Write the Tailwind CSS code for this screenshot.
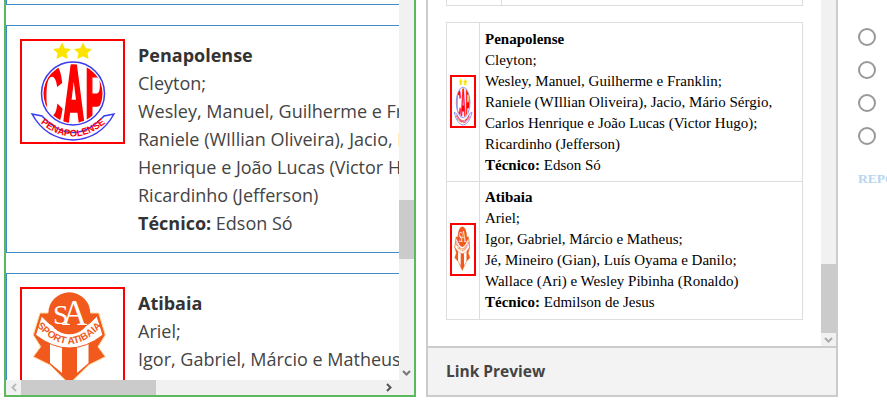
<!DOCTYPE html>
<html>
<head>
<meta charset="utf-8">
<script src="https://cdn.jsdelivr.net/npm/@tailwindcss/browser@4"></script>
</head>
<body class="bg-white">
<svg width="0" height="0" class="absolute">
  <defs>
    <clipPath id="capclip"><circle cx="51" cy="52.500" r="29.500"/></clipPath>
    <path id="penarc" d="M15 79 Q51 112 87 79" fill="none"/>
    <path id="atiarc" d="M14 36 Q47.300 74 80.600 36" fill="none"/>
    <g id="pena">
      <polygon points="40,1.500 42.800,7.200 49,8 44.500,12.300 45.600,18 40,15.300 34.400,18 35.500,12.300 31,8 37.200,7.200" fill="#fde400"/>
      <polygon points="61,1.500 63.800,7.200 70,8 65.500,12.300 66.600,18 61,15.300 55.400,18 56.500,12.300 52,8 58.200,7.200" fill="#fde400"/>
      <path d="M10 73 L20 75 Q51 108 82 75 L92 73 Q78 98 51 99 Q24 98 10 73 Z" fill="#fff" stroke="#3a3af0" stroke-width="1.500"/>
      <circle cx="51" cy="52.500" r="31.500" fill="#fff" stroke="#3a3af0" stroke-width="1.500"/>
      <g clip-path="url(#capclip)">
        <text x="51" y="38.600" transform="scale(1 2.200)" text-anchor="middle" textLength="66" lengthAdjust="spacingAndGlyphs" font-family="Liberation Sans" font-weight="700" font-size="40" fill="#f00" stroke="#f00" stroke-width="1.600">CAP</text>
      </g>
      <text font-family="Liberation Sans" font-weight="700" font-size="9.500" fill="#f00"><textPath href="#penarc" startOffset="50%" text-anchor="middle">PENAPOLENSE</textPath></text>
    </g>
    <g id="ati">
      <path d="M18 24 L11.300 46 L18.700 57.700 L11.300 67.700 L28 76 L47.300 95 L66.700 76 L83.300 67.700 L76 57.700 L83.300 46 L76.700 24 Z" fill="#f15a1c" stroke="#fbd9a0" stroke-width="1"/>
      <polygon points="28,50 40,58 40,84 28,74" fill="#fff"/>
      <polygon points="66.500,50 55,58 55,84 66.500,74" fill="#fff"/>
      <path d="M19.500 27 L13.500 46 Q47.300 72 81 46 L75 27 Q47.300 58 19.500 27 Z" fill="#fff" stroke="#f15a1c" stroke-width="1"/>
      <circle cx="47.300" cy="24.300" r="21" fill="#f15a1c"/>
      <text x="31" y="35" font-family="Liberation Serif" font-size="28" fill="#fff">S</text>
      <text x="40" y="36" font-family="Liberation Serif" font-size="35" fill="#fff">A</text>
      <text font-family="Liberation Sans" font-weight="700" font-size="10" fill="#f15a1c"><textPath href="#atiarc" startOffset="50%" text-anchor="middle">SPORT ATIBAIA</textPath></text>
    </g>
  </defs>
</svg>

<div class="flex h-[403px] w-[887px] overflow-hidden bg-white">
  <!-- left panel -->
  <div class="ml-1 flex h-[397px] w-[412px] shrink-0 flex-col border-x-[2px] border-b-[2px] border-[#5cb85c]">
    <div class="flex min-h-0 flex-1">
      <div class="min-w-0 flex-1 overflow-hidden font-['Open_Sans',sans-serif] text-[18px] leading-[28px] text-[#444]">
        <div class="h-[5px] w-[600px] border-b border-l border-[#428bca]"></div>
        <div class="mt-5 flex h-[228px] w-[600px] gap-[13px] border border-[#428bca] p-[13px]">
          <svg class="h-[105px] w-[105px] shrink-0 border-2 border-[#f00]" viewBox="0 0 101 101"><use href="#pena"/></svg>
          <div class="whitespace-nowrap pt-[2px]">
            <b class="text-[#333]">Penapolense</b><br>Cleyton;<br>Wesley, Manuel, Guilherme e Franklin;<br>Raniele (WIllian Oliveira), Jacio, Mário Sérgio, Carlos<br>Henrique e João Lucas (Victor Hugo);<br>Ricardinho (Jefferson)<br><b class="text-[#333]">Técnico:</b> Edson Só
          </div>
        </div>
        <div class="mt-5 flex w-[600px] gap-[13px] border border-[#428bca] p-[13px]">
          <svg class="h-[105px] w-[105px] shrink-0 border-2 border-[#f00]" viewBox="0 0 101 101"><use href="#ati"/></svg>
          <div class="whitespace-nowrap pt-[2px]">
            <b class="text-[#333]">Atibaia</b><br>Ariel;<br>Igor, Gabriel, Márcio e Matheus;
          </div>
        </div>
      </div>
      <!-- vertical scrollbar -->
      <div class="flex w-[15px] shrink-0 flex-col bg-[#f1f1f1]">
        <div class="mt-[200px] h-[59px] bg-[#cbcbcb]"></div>
        <div class="mt-auto flex h-[15px] items-center justify-center">
          <svg width="9" height="6" viewBox="0 0 9 6"><path d="M1 1 L4.500 4.500 L8 1" fill="none" stroke="#777" stroke-width="2"/></svg>
        </div>
      </div>
    </div>
    <!-- horizontal scrollbar -->
    <div class="flex h-[15px] shrink-0 items-center bg-[#f1f1f1]">
      <div class="flex w-[15px] justify-center">
        <svg width="6" height="9" viewBox="0 0 6 9"><path d="M5 1 L1.500 4.500 L5 8" fill="none" stroke="#bbb" stroke-width="2"/></svg>
      </div>
      <div class="h-full w-[135px] bg-[#cbcbcb]"></div>
      <div class="ml-auto mr-[18px] flex w-[15px] justify-center">
        <svg width="6" height="9" viewBox="0 0 6 9"><path d="M1 1 L4.500 4.500 L1 8" fill="none" stroke="#555" stroke-width="2"/></svg>
      </div>
    </div>
  </div>

  <!-- middle panel -->
  <div class="ml-[10px] flex h-[397px] w-[412px] shrink-0 flex-col border-x-[2px] border-b-[2px] border-[#ccc]">
    <div class="flex min-h-0 flex-1">
      <div class="min-w-0 flex-1 overflow-hidden pl-[18px] font-['Liberation_Serif',serif] text-[15px] leading-[21px] text-black">
        <div class="flex h-[6px] w-[357px] border-x border-b border-[#ddd]">
          <div class="w-[55px] border-r border-[#ddd]"></div>
        </div>
        <table class="mt-4 w-[357px] border-collapse">
          <tr>
            <td class="w-[33px] border border-[#ddd] px-[3px] align-middle">
              <svg class="-mt-[2px] block h-[53px] w-[26px] border-2 border-[#f00]" viewBox="0 0 101 101" preserveAspectRatio="none"><use href="#pena"/></svg>
            </td>
            <td class="border border-[#ddd] px-[5px] pb-[5px] pt-[6px]">
              <b>Penapolense</b><br>Cleyton;<br>Wesley, Manuel, Guilherme e Franklin;<br>Raniele (WIllian Oliveira), Jacio, Mário Sérgio,<br>Carlos Henrique e João Lucas (Victor Hugo);<br>Ricardinho (Jefferson)<br><b>Técnico:</b> Edson Só
            </td>
          </tr>
          <tr>
            <td class="border border-[#ddd] px-[3px] align-middle">
              <svg class="-mt-[2px] block h-[53px] w-[26px] border-2 border-[#f00]" viewBox="0 0 101 101" preserveAspectRatio="none"><use href="#ati"/></svg>
            </td>
            <td class="border border-[#ddd] px-[5px] pb-[6px] pt-[5px]">
              <b>Atibaia</b><br>Ariel;<br>Igor, Gabriel, Márcio e Matheus;<br>Jé, Mineiro (Gian), Luís Oyama e Danilo;<br>Wallace (Ari) e Wesley Pibinha (Ronaldo)<br><b>Técnico:</b> Edmilson de Jesus
            </td>
          </tr>
        </table>
      </div>
      <div class="flex w-[15px] shrink-0 flex-col bg-[#f1f1f1]">
        <div class="mt-[264px] h-[69px] bg-[#cbcbcb]"></div>
        <div class="mt-auto flex h-[13px] items-center justify-center">
          <svg width="9" height="6" viewBox="0 0 9 6"><path d="M1 1 L4.500 4.500 L8 1" fill="none" stroke="#aaa" stroke-width="2"/></svg>
        </div>
      </div>
    </div>
    <div class="flex h-[49px] shrink-0 items-center border-t-[2px] border-[#ccc] bg-[#f3f3f3] pl-[18px] font-['Open_Sans',sans-serif] text-[15.500px] font-bold text-[#444]">Link Preview</div>
  </div>

  <!-- right column -->
  <div class="ml-5 flex flex-col">
    <div class="mt-[28px] flex flex-col gap-[15px]">
      <div class="h-[18px] w-[18px] rounded-full border-2 border-[#999]"></div>
      <div class="h-[18px] w-[18px] rounded-full border-2 border-[#999]"></div>
      <div class="h-[18px] w-[18px] rounded-full border-2 border-[#999]"></div>
      <div class="h-[18px] w-[18px] rounded-full border-2 border-[#999]"></div>
    </div>
    <div class="mt-[24px] whitespace-nowrap font-['Liberation_Serif',serif] text-[13.500px] font-bold leading-[20px] text-[#b8d6ee]">REPORT</div>
  </div>
</div>
</body>
</html>
